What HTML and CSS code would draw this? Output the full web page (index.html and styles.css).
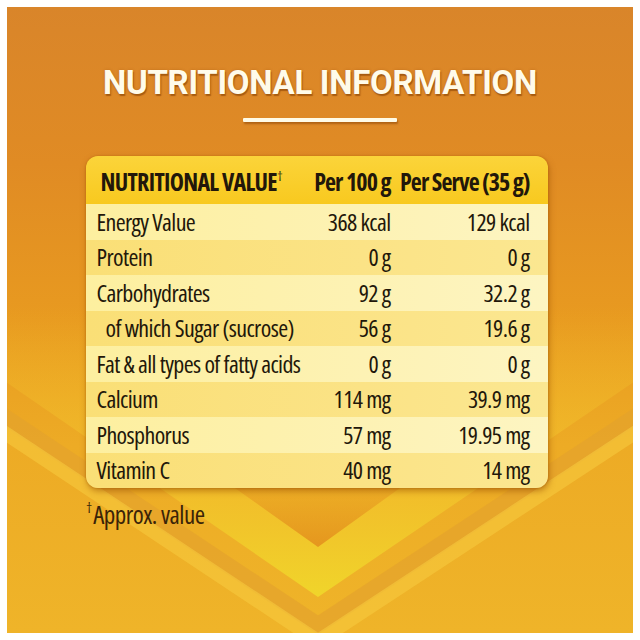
FILE: index.html
```html
<!DOCTYPE html>
<html lang="en">
<head>
<meta charset="utf-8">
<title>Nutritional Information</title>
<link rel="stylesheet" href="styles.css">
</head>
<body>
<div class="panel">
  <svg class="bg" width="626" height="626" viewBox="0 0 626 626" aria-hidden="true">
    <defs>
      <linearGradient id="inner" gradientUnits="userSpaceOnUse" x1="0" y1="300" x2="0" y2="590">
        <stop offset="0" stop-color="#f3c22c" stop-opacity="0"/>
        <stop offset="0.6" stop-color="#f3c22c" stop-opacity="0.7"/>
        <stop offset="1" stop-color="#f0d52a" stop-opacity="1"/>
      </linearGradient>
      <linearGradient id="dark" gradientUnits="userSpaceOnUse" x1="0" y1="440" x2="0" y2="540">
        <stop offset="0" stop-color="#e38d1c" stop-opacity="0"/>
        <stop offset="1" stop-color="#e38d1c" stop-opacity="0.85"/>
      </linearGradient>
    </defs>
    <polygon points="-20,362 311,590 646,362 646,300 -20,300" fill="url(#inner)"/>
    <polygon points="170,440 311,540 450,440" fill="url(#dark)"/>
    <polyline points="-20,398 311,618 646,398" fill="none" stroke="#e4a22c" stroke-width="16" opacity="0.7"/>
    <polyline points="-20,414 311,634 646,414" fill="none" stroke="#f6ca3e" stroke-width="14" opacity="0.6"/>
  </svg>
  <div class="content">
    <h1 class="title">NUTRITIONAL INFORMATION</h1>
    <div class="rule"></div>
    <div class="card">
      <div class="row head">
        <div class="label">NUTRITIONAL VALUE<sup>†</sup></div>
        <div class="val">Per 100 g</div>
        <div class="val">Per Serve (35 g)</div>
      </div>
      <div class="row light">
        <div class="label">Energy Value</div>
        <div class="val">368 kcal</div>
        <div class="val">129 kcal</div>
      </div>
      <div class="row dark">
        <div class="label">Protein</div>
        <div class="val">0 g</div>
        <div class="val">0 g</div>
      </div>
      <div class="row light">
        <div class="label">Carbohydrates</div>
        <div class="val">92 g</div>
        <div class="val">32.2 g</div>
      </div>
      <div class="row dark">
        <div class="label sub">of which Sugar (sucrose)</div>
        <div class="val">56 g</div>
        <div class="val">19.6 g</div>
      </div>
      <div class="row light">
        <div class="label">Fat &amp; all types of fatty acids</div>
        <div class="val">0 g</div>
        <div class="val">0 g</div>
      </div>
      <div class="row dark">
        <div class="label">Calcium</div>
        <div class="val">114 mg</div>
        <div class="val">39.9 mg</div>
      </div>
      <div class="row light">
        <div class="label">Phosphorus</div>
        <div class="val">57 mg</div>
        <div class="val">19.95 mg</div>
      </div>
      <div class="row dark">
        <div class="label">Vitamin C</div>
        <div class="val">40 mg</div>
        <div class="val">14 mg</div>
      </div>
    </div>
    <p class="note"><sup>†</sup>Approx. value</p>
  </div>
</div>
</body>
</html>
```
FILE: styles.css
```css
html, body {
  margin: 0;
  padding: 0;
  background: #ffffff;
}

.panel {
  position: relative;
  width: 626px;
  height: 626px;
  margin: 7px;
  overflow: hidden;
  background: linear-gradient(180deg, #d9852a 0%, #e08b24 25%, #e89a20 50%, #edab25 70%, #efb429 100%);
}

.bg {
  position: absolute;
  left: 0;
  top: 0;
}

.content {
  position: relative;
  display: flex;
  flex-direction: column;
  align-items: center;
  padding-top: 59px;
  font-family: "Open Sans", "Liberation Sans", sans-serif;
  font-stretch: 75%;
  color: #22170a;
}

.title {
  margin: 0;
  font-family: Roboto, "Liberation Sans", sans-serif;
  font-stretch: 90%;
  font-weight: 700;
  font-size: 33px;
  line-height: 33px;
  letter-spacing: -0.3px;
  color: #fffbea;
  text-shadow: 1px 2px 1px rgba(130, 60, 0, 0.55), 0 0 3px rgba(130, 60, 0, 0.3);
}

.rule {
  width: 154px;
  height: 4px;
  margin-top: 19px;
  background: #fffbe6;
  border-radius: 1px;
  box-shadow: 1px 2px 2px rgba(130, 60, 0, 0.5);
}

.card {
  width: 462px;
  margin-top: 34px;
  margin-left: -7px;
  border-radius: 12px;
  overflow: hidden;
  box-shadow: 1px 3px 6px rgba(150, 75, 0, 0.55), 0 0 2px rgba(170, 90, 0, 0.6);
}

.row {
  display: grid;
  grid-template-columns: 204px 90px 139px;
  align-items: center;
  height: 35.5px;
  padding: 0 18px 0 11px;
  font-size: 24px;
  line-height: 24px;
  font-weight: 500;
  letter-spacing: -0.6px;
}

.head {
  height: 48px;
  align-items: end;
  padding-bottom: 10px;
  box-sizing: border-box;
  font-weight: 700;
  font-size: 24px;
  letter-spacing: -0.7px;
  background: linear-gradient(180deg, #fbd43a 0%, #f8c91f 100%);
}

.head .label {
  padding-left: 4px;
}

.head .val {
  letter-spacing: -0.9px;
}

.light {
  background: linear-gradient(90deg, #fdef9f 0%, #fdf2b4 60%, #fdf5c2 100%);
}

.dark {
  background: linear-gradient(90deg, #fadf76 0%, #fbe386 60%, #fbe791 100%);
}

.label {
  white-space: nowrap;
}

.label.sub {
  padding-left: 9px;
}

.val {
  text-align: right;
  white-space: nowrap;
}

sup {
  font-size: 13px;
  line-height: 0;
  vertical-align: 10px;
  font-weight: 400;
  letter-spacing: 0;
}

.note {
  align-self: flex-start;
  margin: 14px 0 0 79px;
  font-size: 25px;
  line-height: 25px;
  font-weight: 500;
  letter-spacing: -0.5px;
  color: #3a2408;
}

.note sup {
  font-size: 14px;
  vertical-align: 11px;
  margin-right: 1px;
}
```
